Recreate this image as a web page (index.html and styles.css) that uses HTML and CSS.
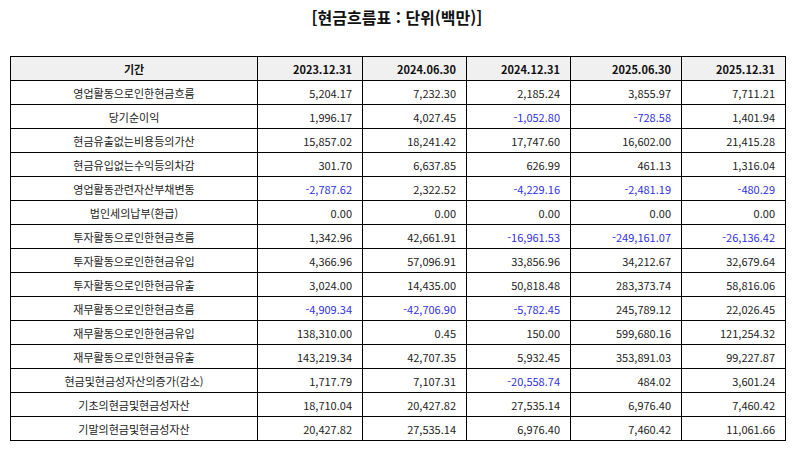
FILE: index.html
```html
<!DOCTYPE html>
<html lang="ko">
<head>
<meta charset="utf-8">
<link rel="stylesheet" href="styles.css">
</head>
<body>
<div class="page">
  <h1 class="title">[현금흐름표 : 단위(백만)]</h1>
  <table class="cf">
    <colgroup>
      <col class="c-label"><col class="c-a"><col class="c-b"><col class="c-c"><col class="c-d"><col class="c-e">
    </colgroup>
    <thead>
      <tr><th class="lbl">기간</th><th>2023.12.31</th><th>2024.06.30</th><th>2024.12.31</th><th>2025.06.30</th><th>2025.12.31</th></tr>
    </thead>
    <tbody>
      <tr><td class="lbl">영업활동으로인한현금흐름</td><td>5,204.17</td><td>7,232.30</td><td>2,185.24</td><td>3,855.97</td><td>7,711.21</td></tr>
      <tr><td class="lbl">당기순이익</td><td>1,996.17</td><td>4,027.45</td><td class="neg">-1,052.80</td><td class="neg">-728.58</td><td>1,401.94</td></tr>
      <tr><td class="lbl">현금유출없는비용등의가산</td><td>15,857.02</td><td>18,241.42</td><td>17,747.60</td><td>16,602.00</td><td>21,415.28</td></tr>
      <tr><td class="lbl">현금유입없는수익등의차감</td><td>301.70</td><td>6,637.85</td><td>626.99</td><td>461.13</td><td>1,316.04</td></tr>
      <tr><td class="lbl">영업활동관련자산부채변동</td><td class="neg">-2,787.62</td><td>2,322.52</td><td class="neg">-4,229.16</td><td class="neg">-2,481.19</td><td class="neg">-480.29</td></tr>
      <tr><td class="lbl">법인세의납부(환급)</td><td>0.00</td><td>0.00</td><td>0.00</td><td>0.00</td><td>0.00</td></tr>
      <tr><td class="lbl">투자활동으로인한현금흐름</td><td>1,342.96</td><td>42,661.91</td><td class="neg">-16,961.53</td><td class="neg">-249,161.07</td><td class="neg">-26,136.42</td></tr>
      <tr><td class="lbl">투자활동으로인한현금유입</td><td>4,366.96</td><td>57,096.91</td><td>33,856.96</td><td>34,212.67</td><td>32,679.64</td></tr>
      <tr><td class="lbl">투자활동으로인한현금유출</td><td>3,024.00</td><td>14,435.00</td><td>50,818.48</td><td>283,373.74</td><td>58,816.06</td></tr>
      <tr><td class="lbl">재무활동으로인한현금흐름</td><td class="neg">-4,909.34</td><td class="neg">-42,706.90</td><td class="neg">-5,782.45</td><td>245,789.12</td><td>22,026.45</td></tr>
      <tr><td class="lbl">재무활동으로인한현금유입</td><td>138,310.00</td><td>0.45</td><td>150.00</td><td>599,680.16</td><td>121,254.32</td></tr>
      <tr><td class="lbl">재무활동으로인한현금유출</td><td>143,219.34</td><td>42,707.35</td><td>5,932.45</td><td>353,891.03</td><td>99,227.87</td></tr>
      <tr><td class="lbl">현금및현금성자산의증가(감소)</td><td>1,717.79</td><td>7,107.31</td><td class="neg">-20,558.74</td><td>484.02</td><td>3,601.24</td></tr>
      <tr><td class="lbl">기초의현금및현금성자산</td><td>18,710.04</td><td>20,427.82</td><td>27,535.14</td><td>6,976.40</td><td>7,460.42</td></tr>
      <tr><td class="lbl">기말의현금및현금성자산</td><td>20,427.82</td><td>27,535.14</td><td>6,976.40</td><td>7,460.42</td><td>11,061.66</td></tr>
    </tbody>
  </table>
</div>
</body>
</html>
```

FILE: styles.css
```css
html, body {
  margin: 0;
  padding: 0;
  background: #ffffff;
}
body {
  font-family: "Noto Sans CJK KR", "Noto Sans", sans-serif;
  color: #222222;
}
.page {
  padding: 7px 10px 0 10px;
}
.title {
  margin: 0;
  text-align: center;
  font-size: 16px;
  line-height: 20px;
  font-weight: 700;
  color: #111111;
}
.cf {
  margin-top: 29px;
  border-collapse: collapse;
  table-layout: fixed;
  width: 775px;
  font-size: 11px;
}
.c-label { width: 247px; }
.c-a { width: 105px; }
.c-b { width: 104px; }
.c-c { width: 104px; }
.c-d { width: 111px; }
.c-e { width: 104px; }
.cf tr {
  height: 24px;
}
.cf th, .cf td {
  border: 1px solid #000000;
  padding: 0 10px 0 4px;
  text-align: right;
  white-space: nowrap;
  line-height: 14px;
}
.cf th {
  background: #f0f0f0;
  font-weight: 700;
  color: #111111;
}
.cf .lbl {
  text-align: center;
  padding: 0 4px;
}
.cf .neg {
  color: #3030e8;
}
```
